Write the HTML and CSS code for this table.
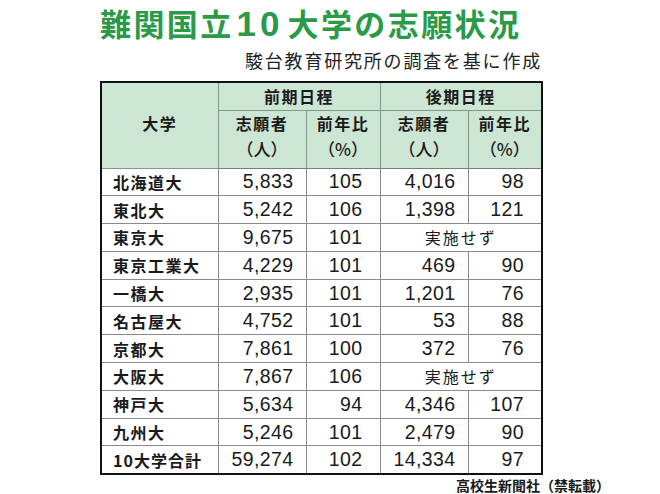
FILE: index.html
```html
<!DOCTYPE html>
<html lang="ja">
<head>
<meta charset="utf-8">
<link rel="stylesheet" href="styles.css">
</head>
<body>
<div class="page">
  <h1 class="title">難関国立<span class="digits">10</span>大学の志願状況</h1>
  <p class="source">駿台教育研究所の調査を基に作成</p>
  <table class="data">
    <colgroup>
      <col class="c-name"><col class="c-num"><col class="c-pct"><col class="c-num"><col class="c-pct">
    </colgroup>
    <thead>
      <tr class="h1">
        <th rowspan="2" class="th-name">大学</th>
        <th colspan="2">前期日程</th>
        <th colspan="2">後期日程</th>
      </tr>
      <tr class="h2">
        <th>志願者<br><span class="unit">（人）</span></th>
        <th>前年比<br><span class="unit">（%）</span></th>
        <th>志願者<br><span class="unit">（人）</span></th>
        <th>前年比<br><span class="unit">（%）</span></th>
      </tr>
    </thead>
    <tbody>
      <tr><td class="name">北海道大</td><td class="n">5,833</td><td class="p">105</td><td class="n">4,016</td><td class="p">98</td></tr>
      <tr><td class="name">東北大</td><td class="n">5,242</td><td class="p">106</td><td class="n">1,398</td><td class="p">121</td></tr>
      <tr><td class="name">東京大</td><td class="n">9,675</td><td class="p">101</td><td class="none" colspan="2">実施せず</td></tr>
      <tr><td class="name">東京工業大</td><td class="n">4,229</td><td class="p">101</td><td class="n">469</td><td class="p">90</td></tr>
      <tr><td class="name">一橋大</td><td class="n">2,935</td><td class="p">101</td><td class="n">1,201</td><td class="p">76</td></tr>
      <tr><td class="name">名古屋大</td><td class="n">4,752</td><td class="p">101</td><td class="n">53</td><td class="p">88</td></tr>
      <tr><td class="name">京都大</td><td class="n">7,861</td><td class="p">100</td><td class="n">372</td><td class="p">76</td></tr>
      <tr><td class="name">大阪大</td><td class="n">7,867</td><td class="p">106</td><td class="none" colspan="2">実施せず</td></tr>
      <tr><td class="name">神戸大</td><td class="n">5,634</td><td class="p">94</td><td class="n">4,346</td><td class="p">107</td></tr>
      <tr><td class="name">九州大</td><td class="n">5,246</td><td class="p">101</td><td class="n">2,479</td><td class="p">90</td></tr>
      <tr class="total"><td class="name">10大学合計</td><td class="n">59,274</td><td class="p">102</td><td class="n">14,334</td><td class="p">97</td></tr>
    </tbody>
  </table>
  <p class="credit">高校生新聞社（禁転載）</p>
</div>
</body>
</html>
```

FILE: styles.css
```css
html, body {
  margin: 0;
  padding: 0;
  background: #ffffff;
}

.page {
  padding-left: 100px;
  width: 443px;
  font-family: "Noto Sans CJK JP", "Noto Sans", sans-serif;
  color: #1a1a1a;
}

.title {
  margin: 0;
  height: 45px;
  line-height: 45px;
  font-size: 31px;
  font-weight: 700;
  letter-spacing: 2.4px;
  color: #2a9a48;
  white-space: nowrap;
}

.title .digits {
  font-family: "Liberation Sans", Arial, sans-serif;
  font-size: 35px;
  letter-spacing: 4px;
  padding: 0 4px 0 3px;
}

.source {
  margin: 5px 0 0 0;
  height: 20px;
  line-height: 20px;
  font-size: 18px;
  font-weight: 400;
  letter-spacing: 1.8px;
  text-align: right;
  padding-right: 1px;
  color: #222;
  white-space: nowrap;
}

.data {
  margin-top: 11px;
  border-collapse: collapse;
  table-layout: fixed;
  width: 443px;
  border: 2px solid #111;
}

.c-name { width: 117px; }
.c-num { width: 88px; }
.c-pct { width: 74px; }

.data th,
.data td {
  border: 1px solid #8a8a8a;
  padding: 0;
  white-space: nowrap;
}

.data thead th {
  background: #cde6d4;
  font-size: 16px;
  font-weight: 700;
  letter-spacing: 1.5px;
  text-align: center;
  color: #1a1a1a;
  border-color: #7f9a88;
}

.data thead tr.h1 { height: 28px; }
.data thead tr.h2 { height: 57px; }

.data thead tr.h1 th { line-height: 26px; }
.data thead tr.h2 th { line-height: 25px; padding-bottom: 6px; }

.data thead tr.h1 th.th-name { padding-bottom: 5px; }

.unit {
  font-size: 17px;
  font-weight: 500;
  letter-spacing: 0;
}

.data thead tr.h2 th { border-bottom-color: #7a7a7a; }

.data tbody tr { height: 27.8px; }

.name {
  font-size: 16px;
  font-weight: 700;
  letter-spacing: 1.5px;
  padding-left: 11px !important;
  text-align: left;
}

.n, .p {
  font-family: "Liberation Sans", Arial, sans-serif;
  font-size: 19.5px;
  letter-spacing: 0.4px;
  text-align: right;
}

.n { padding-right: 12px !important; }
.p { padding-right: 17px !important; }

.none {
  text-align: center;
  font-size: 16px;
  letter-spacing: 2px;
  font-weight: 400;
}

.total .name {
  letter-spacing: 1px;
}

.credit {
  margin: 2px -67px 0 0;
  text-align: right;
  font-size: 14px;
  font-weight: 700;
  letter-spacing: 0;
  line-height: 16px;
  color: #1a1a1a;
  white-space: nowrap;
}
```
